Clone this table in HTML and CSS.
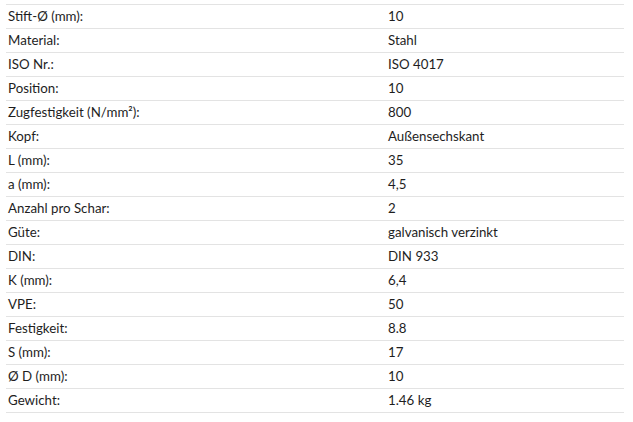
FILE: index.html
```html
<!DOCTYPE html>
<html lang="de">
<head>
<meta charset="utf-8">
<link rel="stylesheet" href="styles.css">
</head>
<body>
<table class="specs">
<tbody>
<tr><td class="k">Stift-Ø (mm):</td><td class="v">10</td></tr>
<tr><td class="k">Material:</td><td class="v">Stahl</td></tr>
<tr><td class="k">ISO Nr.:</td><td class="v">ISO 4017</td></tr>
<tr><td class="k">Position:</td><td class="v">10</td></tr>
<tr><td class="k">Zugfestigkeit (N/mm²):</td><td class="v">800</td></tr>
<tr><td class="k">Kopf:</td><td class="v">Außensechskant</td></tr>
<tr><td class="k">L (mm):</td><td class="v">35</td></tr>
<tr><td class="k">a (mm):</td><td class="v">4,5</td></tr>
<tr><td class="k">Anzahl pro Schar:</td><td class="v">2</td></tr>
<tr><td class="k">Güte:</td><td class="v">galvanisch verzinkt</td></tr>
<tr><td class="k">DIN:</td><td class="v">DIN 933</td></tr>
<tr><td class="k">K (mm):</td><td class="v">6,4</td></tr>
<tr><td class="k">VPE:</td><td class="v">50</td></tr>
<tr><td class="k">Festigkeit:</td><td class="v">8.8</td></tr>
<tr><td class="k">S (mm):</td><td class="v">17</td></tr>
<tr><td class="k">Ø D (mm):</td><td class="v">10</td></tr>
<tr><td class="k">Gewicht:</td><td class="v">1.46 kg</td></tr>
</tbody>
</table>
</body>
</html>
```

FILE: styles.css
```css
html, body {
  margin: 0;
  padding: 0;
  background: #fff;
}
body {
  padding: 4px 9px 0 6px;
  font-family: Lato, "Open Sans", sans-serif;
  font-size: 13.3px;
  color: #1e1e1e;
}
.specs {
  width: 618px;
  border-collapse: collapse;
  border-top: 1px solid #e3e3e3;
}
.specs td {
  height: 22px;
  padding: 0 2px 1px;
  border-bottom: 1px solid #e3e3e3;
  vertical-align: middle;
  line-height: 16px;
}
.specs .k {
  width: 376px;
}
```
